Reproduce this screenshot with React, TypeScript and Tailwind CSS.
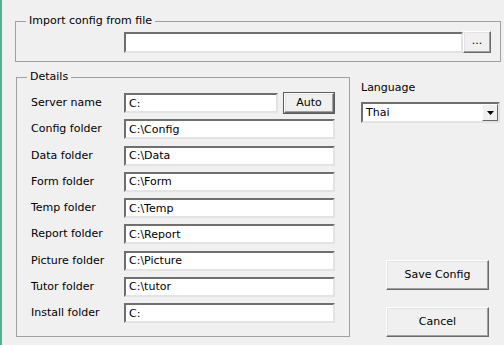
const font = { fontFamily: '"DejaVu Sans", Verdana, sans-serif' };

const rows: [string, string][] = [
  ['Config folder', 'C:\\Config'],
  ['Data folder', 'C:\\Data'],
  ['Form folder', 'C:\\Form'],
  ['Temp folder', 'C:\\Temp'],
  ['Report folder', 'C:\\Report'],
  ['Picture folder', 'C:\\Picture'],
  ['Tutor folder', 'C:\\tutor'],
  ['Install folder', 'C:'],
];

function Field({ value, className = '' }: { value: string; className?: string }) {
  return (
    <div
      className={`h-[20px] bg-white border-2 border-t-[#6f6f6f] border-l-[#6f6f6f] border-b-[#e3e3e3] border-r-[#e3e3e3] pl-[3px] flex items-center leading-none text-black ${className}`}
    >
      {value}
    </div>
  );
}

function Button({ label, className = '' }: { label: string; className?: string }) {
  return (
    <div
      className={`bg-[#f0f0f0] border border-t-white border-l-white border-b-[#696969] border-r-[#696969] shadow-[inset_-1px_-1px_0_#a0a0a0,inset_1px_1px_0_#e3e3e3] flex items-center justify-center text-black ${className}`}
    >
      {label}
    </div>
  );
}

export default function App() {
  return (
    <div
      className="w-[504px] h-[345px] bg-[#f0f0f0] border-l-2 border-[#5bae8d] pl-[13px] pr-[3px] pt-[13px] flex flex-col text-[11px] leading-[16px] text-black overflow-hidden"
      style={font}
    >
      {/* Import config */}
      <fieldset className="border border-[#a0a0a0] pb-[8px]">
        <legend className="ml-[10px] px-[3px]">Import config from file</legend>
        <div className="flex items-start pl-[108px] pr-[9px]">
          <Field value="" className="flex-1 h-[21px] mt-[3px]" />
          <Button label="..." className="w-[28px] h-[22px] mt-[2px] pb-[2px]" />
        </div>
      </fieldset>

      <div className="flex mt-[7px]">
        {/* Details */}
        <fieldset className="ml-[1px] w-[334px] border border-[#a0a0a0] pt-[8px] pb-[13px]">
          <legend className="ml-[10px] px-[3px]">Details</legend>
          <div className="flex flex-col gap-[6.25px] pl-[14px]">
            <div className="flex items-center h-[20px]">
              <span className="w-[93px]">Server name</span>
              <Field value="C:" className="w-[154px]" />
              <div className="ml-[5px] w-[52px] h-[22px] border border-[#5a5a5a] flex">
                <Button label="Auto" className="flex-1" />
              </div>
            </div>
            {rows.map(([label, value]) => (
              <div key={label} className="flex items-center h-[20px]">
                <span className="w-[93px]">{label}</span>
                <Field value={value} className="w-[211px]" />
              </div>
            ))}
          </div>
        </fieldset>

        {/* Right column */}
        <div className="ml-[11px] pt-[11px] flex flex-col">
          <span>Language</span>
          <div className="mt-[6px] w-[139px] h-[21px] bg-white border-2 border-t-[#6f6f6f] border-l-[#6f6f6f] border-b-[#e3e3e3] border-r-[#e3e3e3] flex items-center">
            <span className="flex-1 pl-[3px]">Thai</span>
            <div className="w-[16px] h-[17px] bg-[#f0f0f0] border border-t-white border-l-white border-b-[#696969] border-r-[#696969] flex items-center justify-center">
              <svg width="7" height="4" viewBox="0 0 7 4">
                <path d="M0 0H7L3.5 4Z" fill="#000" />
              </svg>
            </div>
          </div>
          <Button label="Save Config" className="mt-[137px] ml-[25px] w-[103px] h-[30px]" />
          <Button label="Cancel" className="mt-[17px] ml-[25px] w-[103px] h-[30px]" />
        </div>
      </div>
    </div>
  );
}
